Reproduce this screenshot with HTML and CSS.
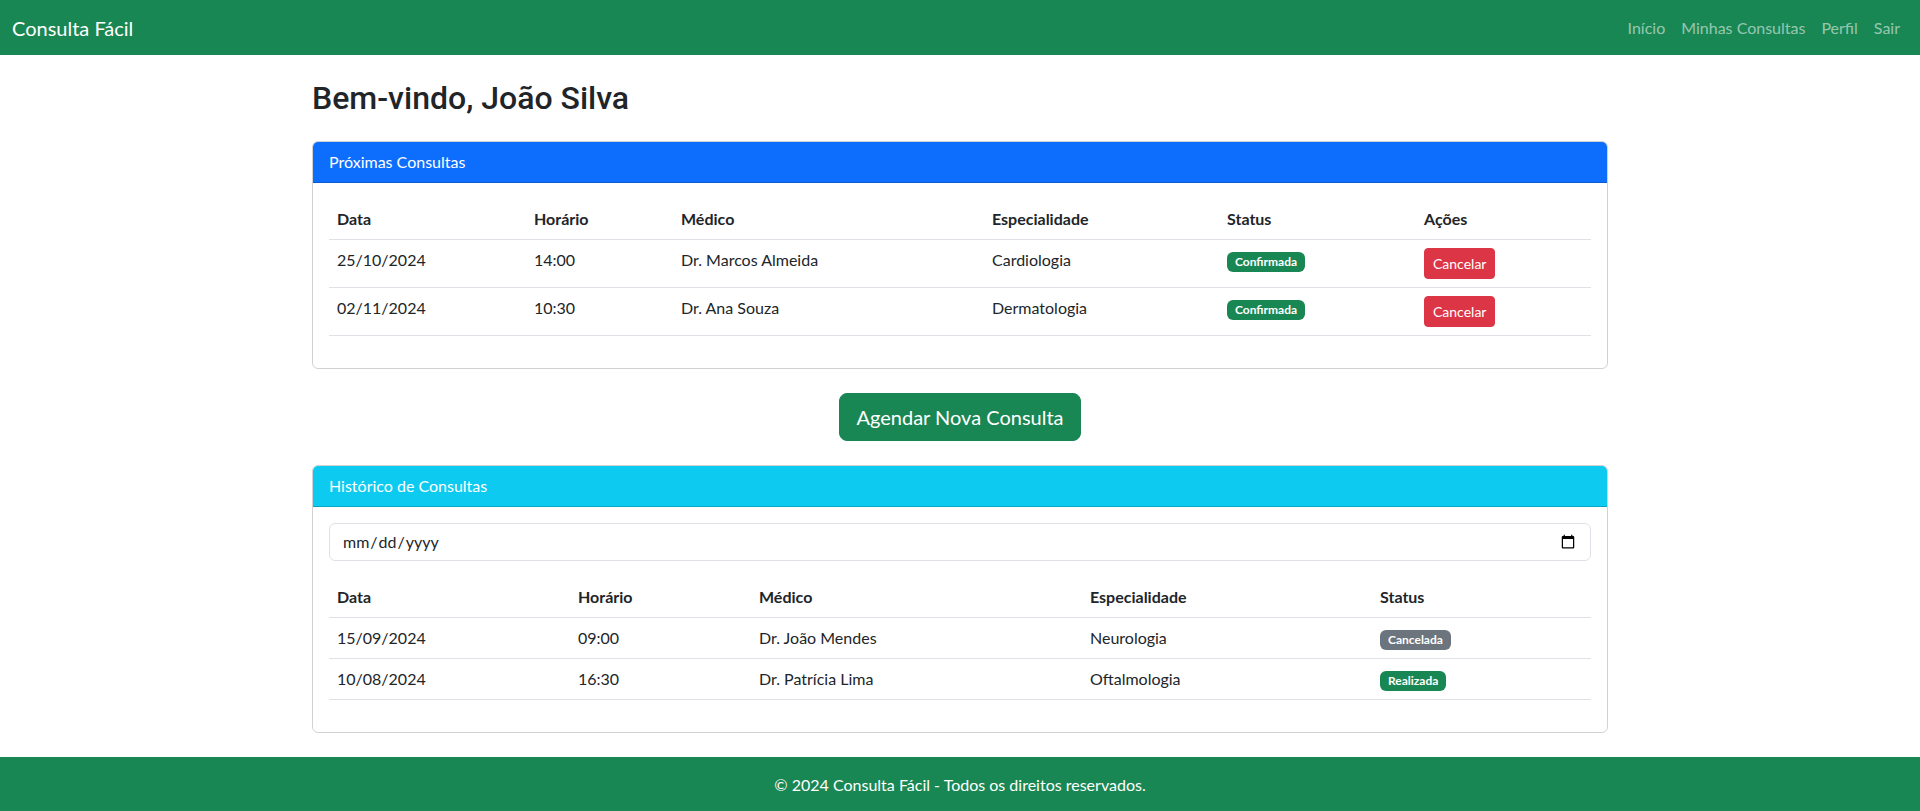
FILE: index.html
```html
<!DOCTYPE html>
<html lang="pt-BR">
<head>
<meta charset="utf-8">
<title>Consulta Fácil</title>
<link rel="stylesheet" href="styles.css">
</head>
<body>
<nav class="navbar">
  <a class="brand" href="#">Consulta Fácil</a>
  <ul class="nav-links">
    <li><a href="#">Início</a></li>
    <li><a href="#">Minhas Consultas</a></li>
    <li><a href="#">Perfil</a></li>
    <li><a href="#">Sair</a></li>
  </ul>
</nav>
<main class="container">
  <h2 class="welcome">Bem-vindo, João Silva</h2>
  <section class="card">
    <div class="card-header header-primary">Próximas Consultas</div>
    <div class="card-body">
      <table class="table">
        <thead>
          <tr><th class="u1">Data</th><th class="u2">Horário</th><th class="u3">Médico</th><th class="u4">Especialidade</th><th class="u5">Status</th><th class="u6">Ações</th></tr>
        </thead>
        <tbody>
          <tr><td>25/10/2024</td><td>14:00</td><td>Dr. Marcos Almeida</td><td>Cardiologia</td><td><span class="badge badge-success">Confirmada</span></td><td><button class="btn-cancel">Cancelar</button></td></tr>
          <tr><td>02/11/2024</td><td>10:30</td><td>Dr. Ana Souza</td><td>Dermatologia</td><td><span class="badge badge-success">Confirmada</span></td><td><button class="btn-cancel">Cancelar</button></td></tr>
        </tbody>
      </table>
    </div>
  </section>
  <div class="action-row">
    <button class="btn-new">Agendar Nova Consulta</button>
  </div>
  <section class="card">
    <div class="card-header header-info">Histórico de Consultas</div>
    <div class="card-body">
      <input type="date" class="date-input">
      <table class="table">
        <thead>
          <tr><th class="h1c">Data</th><th class="h2c">Horário</th><th class="h3c">Médico</th><th class="h4c">Especialidade</th><th class="h5c">Status</th></tr>
        </thead>
        <tbody>
          <tr><td>15/09/2024</td><td>09:00</td><td>Dr. João Mendes</td><td>Neurologia</td><td><span class="badge badge-secondary">Cancelada</span></td></tr>
          <tr><td>10/08/2024</td><td>16:30</td><td>Dr. Patrícia Lima</td><td>Oftalmologia</td><td><span class="badge badge-success">Realizada</span></td></tr>
        </tbody>
      </table>
    </div>
  </section>
</main>
<footer class="footer">© 2024 Consulta Fácil - Todos os direitos reservados.</footer>
</body>
</html>
```

FILE: styles.css
```css
* { box-sizing: border-box; }
html, body { margin: 0; }
body {
  font-family: Lato, "Noto Sans", sans-serif;
  font-size: 16px;
  line-height: 1.5;
  color: #212529;
  background: #fff;
}
.navbar {
  background: #198754;
  display: flex;
  align-items: center;
  justify-content: space-between;
  height: 55px;
  padding: 0 12px;
}
.brand {
  color: #fff;
  text-decoration: none;
  font-size: 20px;
  line-height: 30px;
  padding: 5px 0;
}
.nav-links {
  list-style: none;
  margin: 0;
  padding: 0;
  display: flex;
}
.nav-links a {
  display: block;
  padding: 8px;
  color: rgba(255,255,255,0.55);
  text-decoration: none;
  line-height: 24px;
}
.container {
  max-width: 1320px;
  margin: 24px auto 0;
  padding: 0 12px;
}
.welcome {
  font-family: Roboto, Lato, sans-serif;
  font-size: 32px;
  font-weight: 500;
  line-height: 38px;
  margin: 0 0 24px;
}
.card {
  border: 1px solid rgba(0,0,0,0.175);
  border-radius: 6px;
  margin-bottom: 24px;
  overflow: hidden;
}
.card-header {
  padding: 8px 16px;
  color: #fff;
  border-bottom: 1px solid rgba(0,0,0,0.175);
  line-height: 24px;
}
.header-primary { background: #0d6efd; }
.header-info { background: #0dcaf0; }
.card-body { padding: 16px; }
.table {
  width: 100%;
  border-collapse: collapse;
  table-layout: fixed;
  margin-bottom: 16px;
}
.table th, .table td {
  padding: 8px;
  text-align: left;
  vertical-align: top;
  line-height: 24px;
  border-bottom: 1px solid #dee2e6;
}
.table th { font-weight: 700; vertical-align: bottom; }
.u1 { width: 197px; } .u2 { width: 147px; } .u3 { width: 311px; }
.u4 { width: 235px; } .u5 { width: 197px; } .u6 { width: 175px; }
.h1c { width: 241px; } .h2c { width: 181px; } .h3c { width: 331px; }
.h4c { width: 290px; } .h5c { width: 219px; }
.badge {
  display: inline-block;
  padding: 4px 8px;
  font-size: 12px;
  font-weight: 700;
  line-height: 12px;
  color: #fff;
  border-radius: 6px;
  vertical-align: baseline;
}
.badge-success { background: #198754; }
.badge-secondary { background: #6c757d; }
.btn-cancel {
  font-family: inherit;
  font-size: 14px;
  line-height: 21px;
  height: 31px;
  padding: 4px 8px;
  border: 1px solid #dc3545;
  background: #dc3545;
  color: #fff;
  border-radius: 4px;
  vertical-align: top;
}
.action-row {
  display: flex;
  justify-content: center;
  margin-bottom: 24px;
}
.btn-new {
  font-family: inherit;
  font-size: 20px;
  line-height: 30px;
  height: 48px;
  padding: 8px 16px;
  border: 1px solid #198754;
  background: #198754;
  color: #fff;
  border-radius: 8px;
}
.date-input {
  display: block;
  width: 100%;
  height: 38px;
  font-family: inherit;
  font-size: 16px;
  line-height: 24px;
  padding: 6px 12px;
  border: 1px solid #dee2e6;
  border-radius: 6px;
  color: #212529;
  background: #fff;
  margin-bottom: 16px;
}
.footer {
  background: #198754;
  color: #fff;
  text-align: center;
  line-height: 24px;
  padding: 16px 0;
  margin-top: 24px;
}
```
